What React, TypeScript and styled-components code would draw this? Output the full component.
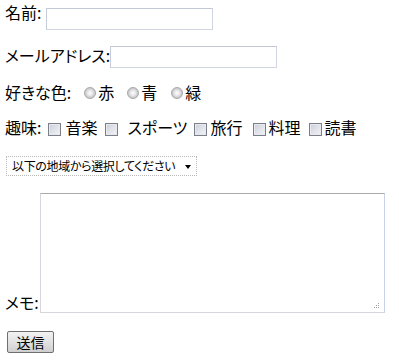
import React from "react";
import styled, { createGlobalStyle } from "styled-components";

const Global = createGlobalStyle`
  html, body { margin: 0; padding: 0; background: #ffffff; }
  body {
    font-family: "Noto Sans CJK JP", "Noto Sans", sans-serif;
    font-size: 16px;
    color: #000000;
  }
`;

const Form = styled.form`
  display: flex;
  flex-direction: column;
  padding-left: 5px;
  width: 394px;
  font-feature-settings: "palt";
`;

const Row = styled.div<{ $h: number }>`
  display: flex;
  align-items: flex-start;
  height: ${(p) => p.$h}px;
`;

const Label = styled.span<{ $mt: number }>`
  display: block;
  margin-top: ${(p) => p.$mt}px;
  line-height: 16px;
  white-space: nowrap;
`;

const TextInput = styled.input<{ $mt: number; $w: number; $ml?: number }>`
  box-sizing: border-box;
  margin: ${(p) => p.$mt}px 0 0 ${(p) => p.$ml ?? 3}px;
  width: ${(p) => p.$w}px;
  height: 22px;
  border: 1px solid #d0d5e0;
  border-top-color: #c2c8d4;
  border-left-color: #c6ccd8;
  background: #ffffff;
  padding: 0 3px;
  font: inherit;
  font-size: 13px;
  outline: none;
`;

const Choice = styled.label<{ $ml: number }>`
  display: flex;
  align-items: flex-start;
  margin-left: ${(p) => p.$ml}px;
  white-space: nowrap;
`;

const Radio = styled.input.attrs({ type: "radio" })<{ $mt: number }>`
  appearance: none;
  box-sizing: border-box;
  margin: ${(p) => p.$mt}px 0 0 0;
  width: 12px;
  height: 12px;
  border-radius: 50%;
  border: 1px solid #a9a9a9;
  background: radial-gradient(circle at 50% 50%, #ffffff 0, #e8e8ea 35%, #bdbdc3 80%, #aeaeb4 100%);
`;

const Check = styled.input.attrs({ type: "checkbox" })<{ $mt: number }>`
  appearance: none;
  box-sizing: border-box;
  margin: ${(p) => p.$mt}px 0 0 0;
  width: 13px;
  height: 13px;
  border: 1px solid #7b7f8a;
  background: linear-gradient(135deg, #c9ccd6 0%, #dfe1e8 45%, #f3f3f5 100%);
  box-shadow: inset 0 0 0 1px #e8e9ee;
`;

const ChoiceText = styled.span<{ $mt: number; $ml: number }>`
  display: block;
  margin-top: ${(p) => p.$mt}px;
  margin-left: ${(p) => p.$ml}px;
  line-height: 16px;
`;

const SelectBox = styled.div`
  box-sizing: border-box;
  margin: 16px 0 0 1px;
  width: 191px;
  height: 20px;
  border: 1px dotted #b8b8b8;
  display: flex;
  align-items: center;
  justify-content: space-between;
  padding: 0 5px 0 5px;
  font-size: 12px;
  letter-spacing: -0.35px;
  line-height: 18px;
  white-space: nowrap;
  background: #ffffff;
`;

const Arrow = styled.span`
  flex: none;
  width: 0;
  height: 0;
  border-left: 3.5px solid transparent;
  border-right: 3.5px solid transparent;
  border-top: 4px solid #000000;
  margin-top: 1px;
`;

const MemoWrap = styled.div`
  position: relative;
  margin: 13px 0 0 1px;
`;

const Memo = styled.textarea`
  display: block;
  box-sizing: border-box;
  width: 345px;
  height: 120px;
  border: 1px solid #d6d6dc;
  border-top-color: #a7aca7;
  border-right-color: #c9d2e8;
  resize: none;
  outline: none;
  font: inherit;
`;

const Grip = styled.svg`
  position: absolute;
  right: 5px;
  bottom: 4px;
`;

const Button = styled.button`
  box-sizing: border-box;
  margin: 16px 0 0 2px;
  width: 47px;
  height: 22px;
  border: 1px solid #6f6f6f;
  border-radius: 2px;
  background: linear-gradient(#f2f2f2 0%, #e2e2e2 50%, #cfcfcf 100%);
  font-family: "Noto Sans CJK JP", sans-serif;
  font-size: 14px;
  line-height: 18px;
  padding: 0;
  color: #000000;
`;

const colors = [
  { t: "赤", ml: 13 },
  { t: "青", ml: 13 },
  { t: "緑", ml: 14 },
];

const hobbies = [
  { t: "音楽", ml: 7, tl: 4 },
  { t: "スポーツ", ml: 8, tl: 9 },
  { t: "旅行", ml: 7, tl: 3 },
  { t: "料理", ml: 11, tl: 2 },
  { t: "読書", ml: 9, tl: 2 },
];

export default function App() {
  return (
    <>
      <Global />
      <Form onSubmit={(e) => e.preventDefault()}>
        <Row $h={30}>
          <Label $mt={4}>名前:</Label>
          <TextInput $mt={8} $w={167} $ml={5} />
        </Row>
        <Row $h={40}>
          <Label $mt={17}>メールアドレス:</Label>
          <TextInput $mt={16} $w={167} $ml={0} />
        </Row>
        <Row $h={35}>
          <Label $mt={14}>好きな色:</Label>
          {colors.map((c) => (
            <Choice key={c.t} $ml={c.ml}>
              <Radio name="color" $mt={17} />
              <ChoiceText $mt={14} $ml={2}>{c.t}</ChoiceText>
            </Choice>
          ))}
        </Row>
        <Row $h={35}>
          <Label $mt={14}>趣味:</Label>
          {hobbies.map((h) => (
            <Choice key={h.t} $ml={h.ml}>
              <Check $mt={18} />
              <ChoiceText $mt={14} $ml={h.tl}>{h.t}</ChoiceText>
            </Choice>
          ))}
        </Row>
        <Row $h={40}>
          <SelectBox>
            <span>以下の地域から選択してください</span>
            <Arrow />
          </SelectBox>
        </Row>
        <Row $h={135}>
          <Label $mt={114}>メモ:</Label>
          <MemoWrap>
            <Memo />
            <Grip width="7" height="7" viewBox="0 0 7 7">
              <rect x="5" y="1" width="1" height="1" fill="#a0a0a0" />
              <rect x="3" y="3" width="1" height="1" fill="#a0a0a0" />
              <rect x="5" y="3" width="1" height="1" fill="#a0a0a0" />
              <rect x="1" y="5" width="1" height="1" fill="#a0a0a0" />
              <rect x="3" y="5" width="1" height="1" fill="#a0a0a0" />
              <rect x="5" y="5" width="1" height="1" fill="#a0a0a0" />
            </Grip>
          </MemoWrap>
        </Row>
        <Row $h={40}>
          <Button type="submit">送信</Button>
        </Row>
      </Form>
    </>
  );
}
